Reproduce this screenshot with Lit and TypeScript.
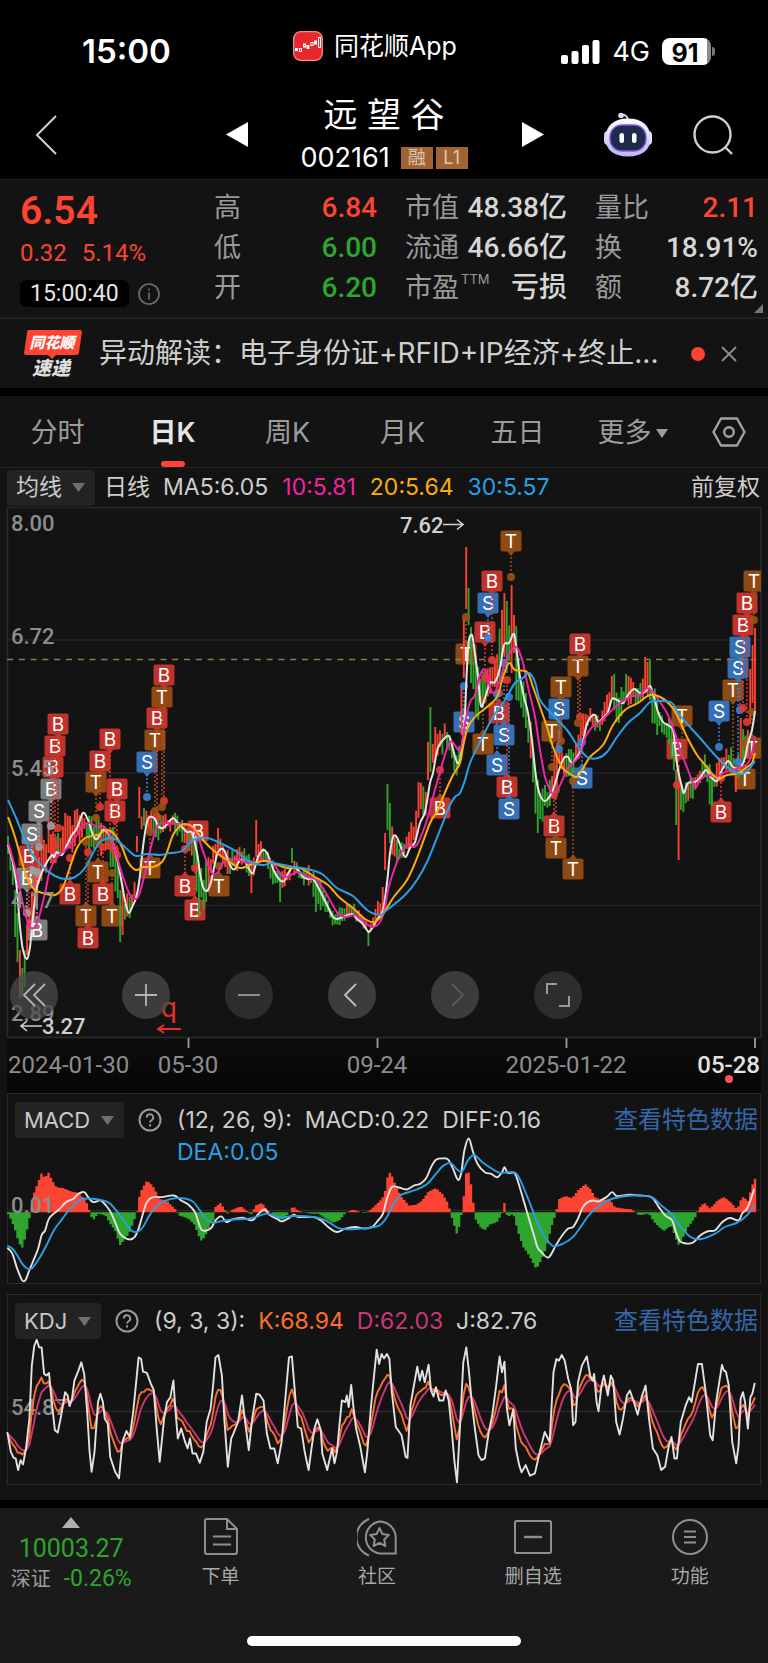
import { LitElement, html, svg, css } from "lit";
import { customElement, state } from "lit/decorators.js";
import { classMap } from "lit/directives/class-map.js";

type Pt = [number, number];

const toPoints = (text: string): Pt[] =>
  text
    .trim()
    .split(/\s+/)
    .map((pair) => pair.split(",").map(Number) as Pt);

/* Price panel, in panel units */
const MA5 = toPoints(`8,845 13,863 17,890 20,927 23,950 27,959 30,947 32,927 34,907 37,887 42,872 47,862 52,855 54,857 57,852 62,855 67,845 72,835 77,828 83,813 88,820 93,835 97,839 103,830 108,833 113,843 118,863 123,890 126,905 129,913 133,905 136,898 139,883 143,847 147,822 150,817 155,819 158,826 163,828 168,823 173,818 177,822 182,827 187,832 192,833 197,853 200,873 203,887 207,891 211,882 215,863 218,852 223,849 227,857 231,867 235,869 240,860 245,862 249,869 253,873 258,857 263,850 267,853 271,863 275,873 280,880 284,881 289,872 293,867 298,870 303,877 308,879 313,879 318,887 323,897 328,907 333,917 337,919 343,917 352,914 357,919 362,923 367,930 369,932 373,927 378,918 383,910 387,883 390,853 393,837 396,836 399,842 405,857 410,848 415,842 420,823 425,812 430,783 433,773 438,748 446,737 450,738 455,757 459,763 462,747 465,713 467,667 469,640 472,635 474,647 478,677 481,706 485,698 490,683 495,682 500,668 504,645 509,643 514,634 517,653 520,677 524,697 528,713 532,740 536,777 540,795 545,801 550,796 554,787 560,767 564,758 568,757 572,763 577,757 582,747 586,727 590,718 595,715 598,722 603,718 608,712 612,699 617,700 623,703 628,695 634,689 640,693 645,692 650,686 654,697 658,712 663,722 668,725 673,730 675,747 678,770 682,787 684,793 688,783 695,782 700,778 706,770 711,777 717,781 722,770 728,761 733,767 740,768 745,758 748,743 752,730 755,711`);
const MA10 = toPoints(`8,842 15,867 20,890 25,913 30,927 35,927 39,917 45,893 50,870 57,857 63,852 70,845 77,835 83,825 90,823 97,827 103,826 110,835 117,857 123,877 130,895 135,899 139,895 145,873 152,843 158,825 167,823 175,824 183,824 192,828 198,837 205,857 212,873 218,872 223,863 230,860 237,859 247,863 257,863 263,860 272,862 280,873 287,877 297,872 308,877 317,880 327,895 337,912 345,917 355,915 363,921 372,927 380,922 385,908 388,890 393,873 400,855 408,844 413,847 418,843 427,820 433,797 440,772 450,742 460,750 465,723 470,702 475,695 480,675 485,670 490,687 494,693 500,680 505,663 513,648 518,649 523,663 528,687 535,717 540,750 545,777 550,790 554,794 560,785 567,770 573,763 580,755 585,738 592,727 600,722 610,712 620,703 630,697 640,695 647,688 653,692 660,702 668,715 675,733 680,750 688,770 695,787 700,780 708,775 717,777 723,773 733,770 742,767 748,763 752,753 755,736`);
const MA20 = toPoints(`8,817 15,837 22,862 28,880 35,890 43,893 55,895 63,887 70,867 77,848 85,838 97,835 107,830 115,835 122,847 128,862 136,870 143,867 153,867 162,862 167,852 173,835 180,826 185,824 193,827 203,840 213,850 227,860 240,868 250,865 263,861 273,863 287,868 300,868 315,877 328,885 340,898 353,908 365,919 375,922 385,911 393,898 407,880 417,858 430,823 437,812 443,797 452,777 460,763 463,747 468,727 477,715 487,707 497,697 503,677 509,663 515,670 527,672 533,687 540,707 547,727 553,747 562,767 570,774 577,777 582,770 590,757 603,745 613,725 625,710 638,703 650,695 662,698 672,707 678,717 687,737 697,755 707,767 713,775 719,779 727,775 738,773 747,767 752,763 755,753`);
const MA30 = toPoints(`8,800 17,820 25,840 33,855 43,867 55,876 65,879 75,877 85,868 93,853 100,842 110,838 117,840 128,850 136,856 147,854 160,855 170,853 182,851 193,840 207,838 220,843 237,852 250,862 263,865 273,863 293,867 307,869 322,874 337,888 353,896 367,910 380,915 387,910 405,895 417,880 428,860 440,830 450,805 455,797 460,793 465,780 470,763 480,742 493,717 505,700 515,683 523,678 529,673 535,682 540,700 550,712 567,730 577,745 587,757 598,758 607,752 617,737 628,723 640,713 650,702 660,701 672,703 678,713 690,727 700,738 713,753 727,767 740,774 748,770 755,761`);

/* x, high, low */
const RANGE: [number, number, number][] = [
  [8,838,862],[13,862,895],[18,893,955],[21,950,995],[25,935,985],[30,900,935],[35,868,915],[42,835,880],[50,828,862],[57,835,870],[65,815,855],[75,812,850],[83,806,835],[90,820,853],[97,815,855],[107,823,850],[113,830,880],[119,860,930],[125,890,930],[130,895,918],[136,870,900],[139,835,855],[142,808,835],[150,806,832],[158,815,842],[165,815,835],[173,812,828],[182,820,842],[190,828,855],[197,840,895],[203,865,910],[210,850,885],[218,830,855],[226,845,880],[235,850,872],[245,845,870],[252,855,885],[258,835,860],[265,845,860],[271,860,885],[280,865,890],[287,870,885],[293,853,872],[300,865,885],[308,865,885],[316,875,900],[325,890,918],[335,910,928],[345,905,920],[355,905,922],[362,915,928],[369,925,938],[375,905,925],[381,897,915],[386,840,900],[389,800,850],[394,830,865],[400,845,865],[408,830,850],[415,815,845],[420,785,825],[427,780,815],[432,735,775],[438,725,765],[445,722,745],[452,735,765],[458,750,785],[463,690,740],[467,610,670],[471,630,680],[476,655,720],[482,670,710],[488,665,700],[495,655,700],[502,620,680],[508,610,680],[514,620,670],[520,665,720],[526,695,730],[532,730,790],[538,770,830],[545,785,815],[552,770,810],[558,730,780],[565,750,775],[573,750,775],[578,725,760],[585,705,735],[592,708,728],[600,715,735],[606,700,722],[612,678,712],[619,695,725],[627,675,705],[636,685,705],[643,680,700],[648,662,695],[652,675,720],[658,705,735],[664,715,740],[670,715,750],[675,740,790],[680,770,830],[685,785,808],[692,775,800],[700,765,785],[705,755,775],[711,770,810],[718,755,780],[724,753,770],[730,745,770],[736,755,790],[741,725,775],[747,730,765],[751,660,740],[755,635,705],
];

/* Sessions with a range of their own: x, high, low, rising */
const SPIKES: [number, number, number, boolean][] = [
  [15,890,937,false],[18,913,962,false],[20,950,998,true],[23,968,997,false],[27,925,955,true],[49,818,853,true],[65,813,848,true],[119,890,942,false],[122,885,935,true],[138,836,852,true],[140,787,818,true],[143,808,826,false],[200,867,917,false],[219,828,850,true],[252,860,893,true],[256,820,857,true],[280,872,902,false],[292,848,863,false],[316,880,912,false],[368,930,946,false],[386,833,870,true],[388,784,830,false],[391,803,843,false],[419,782,818,true],[422,783,809,true],[431,707,772,false],[428,742,780,true],[435,727,760,true],[462,686,735,true],[464,618,678,true],[466,547,609,true],[469,588,625,false],[471,627,683,false],[502,610,657,true],[504,593,657,true],[507,601,673,false],[511,585,673,true],[514,615,653,true],[516,626,700,false],[537,780,833,false],[611,676,700,true],[613,674,710,false],[627,674,700,false],[646,657,690,true],[649,660,700,false],[677,770,825,false],[679,765,860,true],[711,778,806,false],[741,718,770,true],[752,645,703,true],[755,628,713,true],
];

type Mark = [number, number, "B" | "S" | "T", number?, string?];
/* x, y, kind, y of the traded price, tone */
const MARKS: Mark[] = [
  [58,724,"B",828],[55,746,"B",845],[53,767,"B",850],[51,789,"B",826,"old"],[39,811,"S",847,"old"],[32,834,"S",870,"old"],[29,856,"B",911],[27,878,"B",913,"old"],[37,930,"B",872,"old"],
  [110,739,"B",846],[100,761,"B",807],[96,782,"T",818],[117,789,"B",855],[115,811,"B",850],
  [164,675,"B",801],[162,697,"T",807],[157,718,"B",817],[155,740,"T",811],[147,762,"S",797],
  [198,831,"B"],[150,868,"T",832],[70,894,"B",858],[98,872,"T",842],[103,894,"B",847],[86,916,"T",842],[88,938,"B",852],[112,916,"T",873],[185,886,"B",849],[195,910,"B",868],[219,886,"T",866],
  [511,541,"T",577],[492,581,"B",660],[488,603,"S",638],[485,632,"B",678],[466,654,"T",617],[464,722,"S",686],[483,744,"T",700],[499,713,"B",693],[504,735,"S",663],[497,765,"S",694],[507,787,"B",680],[509,809,"S",697],[440,808,"B",770],
  [561,687,"T",741],[559,709,"S",749],[552,731,"T",767],[580,644,"B",717],[578,666,"T",723],[582,778,"S",742],[554,826,"B",795],[556,848,"T",790],[573,869,"T",781],
  [682,716,"T",752],[677,749,"B",785],[719,711,"S",747],[733,690,"T",770],[738,668,"S",762],[740,647,"S",710],[743,625,"B",708],[747,603,"B",722],[754,581,"T",620],[752,748,"T",712],[745,779,"T",744],[721,812,"B",778],
];

/* Indicator panels, in plotting units */
const UNIT_X = 768 / 1568;
const HIST = toPoints(`15,384 20,395 30,430 38,470 45,490 52,455 60,400 65,365 70,320 78,290 85,262 92,280 98,258 105,280 115,305 130,308 145,318 160,322 175,345 182,374 185,392 192,402 200,385 215,390 225,415 235,435 245,480 255,462 265,440 275,400 281,370 283,340 290,310 300,285 308,295 316,310 325,340 340,345 360,375 365,390 385,400 398,420 405,450 412,468 420,450 428,420 438,400 440,365 450,353 460,375 465,385 475,372 492,363 503,375 512,390 522,360 535,352 545,372 555,385 575,405 590,384 598,362 608,376 635,385 650,385 665,400 680,412 693,405 705,384 720,372 745,384 755,375 770,355 780,340 788,310 793,255 800,270 808,300 820,335 835,360 850,358 862,345 875,318 890,308 903,325 912,345 918,370 922,395 933,448 940,410 944,370 948,320 952,262 958,260 963,310 968,370 970,400 980,425 990,435 1000,418 1015,410 1025,384 1030,352 1034,388 1040,392 1048,384 1052,410 1060,450 1068,485 1080,510 1095,552 1105,525 1115,490 1125,430 1135,384 1142,340 1155,332 1168,338 1180,315 1195,296 1205,310 1215,335 1230,345 1245,340 1255,365 1275,370 1290,372 1305,390 1325,384 1335,410 1355,438 1370,420 1385,480 1395,455 1405,425 1420,395 1427,368 1438,352 1450,370 1465,345 1478,335 1492,350 1505,372 1512,345 1520,330 1525,355 1532,320 1540,280`);
const DIFF = toPoints(`15,488 25,505 35,550 45,585 52,585 60,555 70,520 78,490 85,450 92,435 100,400 112,382 122,370 135,350 150,340 160,325 172,320 180,335 190,350 205,345 215,358 225,378 235,410 243,440 252,455 265,463 275,455 283,430 290,395 300,350 312,335 330,335 355,330 370,345 385,358 398,380 405,410 413,435 430,430 440,405 452,393 462,410 475,402 495,397 515,405 528,385 540,372 550,388 565,400 575,408 590,398 600,388 610,395 640,395 655,405 670,425 688,440 705,430 725,425 745,430 760,425 772,405 782,385 790,340 800,305 812,305 830,312 845,300 858,295 870,278 880,245 890,222 905,218 915,222 925,250 935,283 942,260 948,195 957,158 965,195 975,235 990,260 1003,265 1015,275 1025,260 1030,245 1037,262 1050,262 1058,290 1070,350 1080,400 1090,450 1097,485 1105,500 1120,517 1135,480 1148,450 1160,430 1170,425 1180,400 1190,365 1200,350 1212,345 1222,348 1238,335 1250,320 1260,332 1285,328 1305,330 1330,335 1345,365 1358,390 1372,405 1380,440 1388,468 1400,475 1415,472 1430,450 1445,438 1460,435 1475,410 1490,398 1508,405 1515,385 1525,370 1532,345 1540,310`);
const DEA = toPoints(`15,482 25,490 35,510 45,535 55,550 65,550 80,520 95,480 110,435 125,405 140,375 155,352 170,340 190,340 210,345 225,355 240,380 255,410 268,435 280,440 292,425 305,390 320,362 340,345 360,338 380,340 395,350 408,375 420,400 435,412 450,408 475,402 510,400 545,385 570,397 600,392 640,395 665,405 690,428 710,432 750,428 775,420 790,395 805,350 820,328 845,315 870,298 890,265 905,240 920,232 932,250 943,258 955,225 968,208 985,230 1005,250 1020,262 1040,260 1055,265 1070,310 1085,365 1100,420 1115,460 1130,483 1150,475 1170,455 1190,415 1205,385 1225,360 1250,340 1290,330 1330,335 1350,360 1370,385 1390,425 1410,455 1430,462 1460,445 1480,425 1505,412 1525,390 1540,360`);
const J_LINE = toPoints(`15,440 22,500 28,518 32,520 37,555 42,525 47,538 53,490 60,400 65,240 70,180 75,162 80,185 85,185 90,265 95,270 100,262 105,340 112,435 118,442 125,390 133,320 138,330 142,362 147,340 152,285 160,255 166,230 172,265 178,380 183,500 187,560 193,500 200,350 205,325 210,350 214,400 220,415 225,515 235,560 243,580 250,470 258,437 265,455 272,380 283,215 288,220 292,258 300,262 308,295 314,315 320,430 326,530 335,400 341,350 348,335 354,285 358,370 363,460 370,430 378,470 383,490 388,460 393,505 400,505 408,533 415,500 422,410 430,370 435,300 440,215 446,208 453,270 458,400 465,545 472,460 478,440 486,410 494,330 500,405 508,495 515,400 523,325 530,328 538,345 545,445 552,490 560,490 567,535 575,470 583,330 590,215 596,212 602,320 608,425 615,430 622,500 630,555 636,490 642,430 648,402 655,435 658,505 668,555 678,490 683,535 688,500 693,420 698,345 705,350 708,330 712,365 717,298 722,370 727,430 735,480 745,562 750,500 757,370 763,280 769,192 774,235 779,205 784,218 790,205 795,220 800,320 808,425 820,450 828,515 832,518 838,360 845,300 852,243 857,285 862,255 867,290 875,237 880,315 885,333 890,305 897,345 905,345 910,315 916,345 922,430 928,530 933,592 940,400 946,230 952,185 958,265 963,350 970,435 977,510 983,525 990,520 998,440 1005,390 1013,300 1020,212 1025,260 1030,228 1035,370 1040,420 1048,372 1053,490 1060,540 1065,562 1073,540 1082,572 1092,565 1102,500 1112,440 1122,470 1130,260 1136,220 1141,225 1147,208 1153,225 1160,280 1166,310 1170,420 1175,410 1180,290 1188,240 1198,212 1205,270 1210,285 1213,265 1218,350 1222,378 1228,300 1233,270 1237,300 1241,330 1247,270 1252,285 1258,410 1265,448 1272,400 1280,330 1286,315 1292,340 1302,388 1310,335 1318,300 1325,400 1333,490 1342,510 1350,555 1358,545 1365,485 1371,455 1377,520 1382,520 1390,410 1400,360 1407,335 1412,350 1425,235 1433,235 1440,310 1450,450 1455,465 1462,350 1474,238 1478,255 1482,258 1488,300 1495,470 1503,535 1508,480 1512,340 1517,320 1521,350 1527,430 1532,335 1536,325 1541,292`);

const fmt = (n: number) => n.toFixed(1);

/* Catmull-Rom spline through the samples */
function smooth(p: Pt[]): string {
  let d = `M${fmt(p[0][0])} ${fmt(p[0][1])}`;
  for (let i = 0; i < p.length - 1; i++) {
    const a = p[Math.max(i - 1, 0)];
    const b = p[i];
    const c = p[i + 1];
    const e = p[Math.min(i + 2, p.length - 1)];
    d += `C${fmt(b[0] + (c[0] - a[0]) / 6)} ${fmt(b[1] + (c[1] - a[1]) / 6)} ${fmt(c[0] - (e[0] - b[0]) / 6)} ${fmt(c[1] - (e[1] - b[1]) / 6)} ${fmt(c[0])} ${fmt(c[1])}`;
  }
  return d;
}

const straight = (p: Pt[]) => "M" + p.map(([x, y]) => `${fmt(x)} ${fmt(y)}`).join("L");

function at(p: Pt[], x: number): number {
  let i = 1;
  while (i < p.length - 1 && p[i][0] < x) i++;
  const [x0, y0] = p[i - 1];
  const [x1, y1] = p[i];
  const t = Math.min(1, Math.max(0, (x - x0) / (x1 - x0)));
  return y0 + (y1 - y0) * t;
}

const PITCH = 747 / 313;
const SESSIONS = Array.from({ length: 314 }, (_, i) => 8 + i * PITCH);

function candlePaths(): [string, string] {
  const highs = RANGE.map(([x, h]) => [x, h] as Pt);
  const lows = RANGE.map(([x, , l]) => [x, l] as Pt);
  let seed = 7;
  const random = () => (seed = (seed * 16807) % 2147483647) / 2147483647;
  let up = "";
  let down = "";
  for (const x of SESSIONS) {
    const spike = SPIKES.find((s) => Math.abs(s[0] - x) <= PITCH / 2);
    const h = at(highs, x);
    const l = at(lows, x);
    const r1 = random();
    const r2 = random();
    const r3 = random();
    const size = l - h;
    const top = spike ? spike[1] : h + size * (r1 * 0.45 - 0.08);
    const bottom = spike ? spike[2] : l - size * (r2 * 0.45 - 0.08);
    const slope = at(MA5, x + 3) - at(MA5, x - 3);
    const rising = spike ? spike[3] : r3 > 0.5 + Math.max(-0.38, Math.min(0.38, slope / 22));
    const seg = `M${fmt(x)} ${fmt(top)}V${fmt(bottom)}`;
    if (rising) up += seg;
    else down += seg;
  }
  return [up, down];
}

function kdj(): { k: Pt[]; d: Pt[]; j: Pt[] } {
  const k: Pt[] = [];
  const d: Pt[] = [];
  let prev = 445;
  for (const x of SESSIONS) {
    const j = at(J_LINE, x / UNIT_X);
    const kv = ((j + (4 / 3) * prev) * 3) / 7;
    prev = (2 / 3) * prev + kv / 3;
    k.push([x, 1285 + kv / 3]);
    d.push([x, 1285 + prev / 3]);
  }
  return { k, d, j: J_LINE.map(([x, y]) => [x * UNIT_X, 1285 + y / 3] as Pt) };
}

const macdPt = ([x, y]: Pt): Pt => [x * UNIT_X, 1085 + y / 3];

function histogram(): [string, string] {
  let up = "";
  let down = "";
  const zero = 1212;
  for (const x of SESSIONS) {
    const y = 1085 + at(HIST, x / UNIT_X) / 3;
    const seg = `M${fmt(x - 1.2)} ${zero}V${fmt(y)}h2.4V${zero}z`;
    if (y < zero) up += seg;
    else down += seg;
  }
  return [up, down];
}

const CANDLES = candlePaths();
const BARS = histogram();
const KDJ = kdj();

const TONES: Record<string, string> = { B: "#c0332a", S: "#366fb6", T: "#8f4a13", old: "#7d7d7d" };
const PRICE_TONES: Record<string, string> = { B: "#e23a31", S: "#3d7fd6", T: "#9c5314", old: "#a0a0a0" };

@customElement("price-chart")
export class PriceChart extends LitElement {
  static styles = css`
    :host { display: block; position: relative; }
    svg { display: block; }
    .plot { width: 100%; }
    .axis { font: 500 22px Roboto, sans-serif; fill: #8d8d8d; }
    .extreme { font: 500 22px Roboto, sans-serif; fill: #d0d0d0; }
    .date { font: 24px Roboto, sans-serif; fill: #8d8d8d; }
    .latest { fill: #e2e2e2; font-weight: 500; }
    .event { font: 28px Roboto, sans-serif; fill: #e0302b; }
    .letter { font: 19px Inter, sans-serif; fill: #fff; text-anchor: middle; }
    .end { text-anchor: end; }
    .middle { text-anchor: middle; }
    .tools { position: absolute; top: 79%; left: 10px; display: flex; gap: 55px; padding-top: 1px; }
    .tool { width: 48px; height: 48px; padding: 0; border: 0; border-radius: 50%; background: rgba(75, 75, 75, 0.75); display: grid; place-items: center; }
    .tool:first-child { margin-right: 9px; }
    .dim { background: rgba(52, 52, 52, 0.8); }
  `;

  private mark([x, y, kind, price, tone]: Mark) {
    const key = tone ?? kind;
    const below = price !== undefined && price > y;
    const arrow = below ? `M${x - 4} ${y + 10}h8l-4 5z` : `M${x - 4} ${y - 10}h8l-4 -5z`;
    return svg`
      <rect x=${x - 10.5} y=${y - 10.5} width="21" height="21" rx="2" fill=${TONES[key]}></rect>
      ${price === undefined ? null : svg`<path d=${arrow} fill=${TONES[key]}></path>`}
      <text class="letter" x=${x} y=${y + 7}>${kind}</text>`;
  }

  private stem([x, y, kind, price, tone]: Mark) {
    if (price === undefined) return null;
    const start = price > y ? y + 12 : y - 12;
    return svg`
      <path d="M${x} ${start}V${price}" stroke=${PRICE_TONES[tone ?? kind]} stroke-width="1.5" stroke-dasharray="2 2"></path>
      <circle cx=${x} cy=${price} r="4" fill=${PRICE_TONES[tone ?? kind]} opacity="0.9"></circle>`;
  }

  render() {
    return html`
      <svg class="plot" viewBox="0 507 768 586" role="img" aria-label="日K">
        <defs>
          <clipPath id="plot"><rect x="7" y="507" width="754" height="531"></rect></clipPath>
          <linearGradient id="fade" x1="0" x2="0" y1="0" y2="1"><stop offset="0" stop-color="#0d0d0d"></stop><stop offset="1" stop-color="#060606"></stop></linearGradient>
        </defs>
        <rect x="7" y="1038" width="754" height="55" fill="url(#fade)"></rect>
        <path d="M7 640H761M7 773H761M7 905.5H761" stroke="#242424" stroke-width="1.5"></path>
        <rect x="7.5" y="507.5" width="753.5" height="530" fill="none" stroke="#2b2b2b" stroke-width="1.5"></rect>
        <g clip-path="url(#plot)">
          ${MARKS.map((m) => this.mark(m))}
          <path d="M7 659.5H757" stroke="#93794f" stroke-width="1.3" stroke-dasharray="6 5.8"></path>
          <path d=${CANDLES[0]} stroke="#fb4331" stroke-width="1.9"></path>
          <path d=${CANDLES[1]} stroke="#2ea22c" stroke-width="1.9"></path>
          ${MARKS.map((m) => this.stem(m))}
          <g fill="none" stroke-width="2" stroke-linejoin="round">
            <path d=${smooth(MA5)} stroke="#e4e4e4"></path>
            <path d=${smooth(MA10)} stroke="#ef25a3"></path>
            <path d=${smooth(MA20)} stroke="#fcab0c"></path>
            <path d=${smooth(MA30)} stroke="#2a9fe6"></path>
          </g>
        </g>
        <text class="axis" x="11" y="531">8.00</text>
        <text class="axis" x="11" y="644">6.72</text>
        <text class="axis" x="11" y="776">5.45</text>
        <text class="axis" x="11" y="908">4.17</text>
        <text class="axis" x="11" y="1021">2.89</text>
        <text class="extreme" x="400" y="533">7.62</text>
        <path d="M443 524.500h20m-6 -5l6 5l-6 5" fill="none" stroke="#d0d0d0" stroke-width="1.6"></path>
        <text class="extreme" x="42" y="1034">3.27</text>
        <path d="M42 1026H21m6 -5l-6 5l6 5" fill="none" stroke="#d0d0d0" stroke-width="1.6"></path>
        <text class="event" x="161" y="1017">q</text>
        <path d="M181 1029H159m5 -4l-6 4l6 4" fill="none" stroke="#e0302b" stroke-width="2"></path>
        <path d="M188.500 1038v10M377.500 1038v10M566.500 1038v10M755 1038v10" stroke="#9a9a9a" stroke-width="1.8"></path>
        <text class="date" x="8" y="1073">2024-01-30</text>
        <text class="date middle" x="188" y="1073">05-30</text>
        <text class="date middle" x="377" y="1073">09-24</text>
        <text class="date middle" x="566" y="1073">2025-01-22</text>
        <text class="date latest end" x="760" y="1073">05-28</text>
        <circle cx="729" cy="1079" r="4" fill="#fb5252"></circle>
      </svg>
      <div class="tools">
        <button class="tool" aria-label="最早">
          <svg width="26" height="26" viewBox="0 0 26 26" fill="none" stroke="#b4b4b4" stroke-width="1.8"><path d="M14 2L3 13L14 24M24 2L13 13L24 24"></path></svg>
        </button>
        <button class="tool" aria-label="放大">
          <svg width="24" height="24" viewBox="0 0 24 24" stroke="#b4b4b4" stroke-width="1.8"><path d="M1 12H23M12 1V23"></path></svg>
        </button>
        <button class="tool dim" aria-label="缩小">
          <svg width="24" height="24" viewBox="0 0 24 24" stroke="#9a9a9a" stroke-width="1.8"><path d="M1 12H23"></path></svg>
        </button>
        <button class="tool" aria-label="向前">
          <svg width="26" height="26" viewBox="0 0 26 26" fill="none" stroke="#c0c0c0" stroke-width="1.8"><path d="M17 2L6 13L17 24"></path></svg>
        </button>
        <button class="tool" aria-label="向后" disabled>
          <svg width="26" height="26" viewBox="0 0 26 26" fill="none" stroke="#5a5a5a" stroke-width="1.8"><path d="M10 2L21 13L10 24"></path></svg>
        </button>
        <button class="tool dim" aria-label="全屏">
          <svg width="26" height="26" viewBox="0 0 26 26" fill="none" stroke="#9a9a9a" stroke-width="2"><path d="M2 12V2H12M14 24H24V14"></path></svg>
        </button>
      </div>`;
  }
}

const shared = css`
  * { box-sizing: border-box; }
  svg { display: block; flex: none; }
  button, select { font: inherit; color: inherit; border: 0; background: none; padding: 0; margin: 0; }
  a { text-decoration: none; }
  .picker { display: flex; align-items: center; position: relative; height: 36px; background: #232323; border-radius: 4px; color: #c9c9c9; }
  .picker select { appearance: none; height: 36px; padding: 0 33px 0 9px; font-size: 22px; outline: 0; }
  .picker svg { position: absolute; right: 10px; pointer-events: none; }
`;

const caret = html`<svg width="13" height="9" viewBox="0 0 13 9"><path d="M0 0H13L6.500 9z" fill="#6f6f6f"></path></svg>`;

@customElement("app-root")
export class AppRoot extends LitElement {
  @state() private tab = "日K";

  static styles = [
    shared,
    css`
      :host { display: block; background: #131313; color: #d6d6d6; font-family: Inter, "Noto Sans CJK SC", sans-serif; line-height: 1.2; }
      .top { background: #000; color: #fff; }
      .status { display: grid; grid-template-columns: 1fr auto 1fr; align-items: center; height: 96px; padding: 8px 53px 0; }
      .clock { font-size: 33px; font-weight: 600; padding-left: 29px; }
      .source { display: flex; align-items: center; gap: 11px; font-size: 25px; padding: 0 18px 12px 0; }
      .signal { display: flex; align-items: center; justify-content: flex-end; gap: 12px; font-size: 27px; }
      .battery { display: flex; align-items: center; gap: 1px; }
      .charge { display: grid; place-items: center; width: 49px; height: 27px; border-radius: 8px; background: linear-gradient(90deg, #fff 91%, #8b8b8b 91%); color: #000; font-size: 25px; font-weight: 700; padding-right: 3px; }
      .nub { width: 3px; height: 9px; border-radius: 0 4px 4px 0; background: #777; }
      .nav { display: grid; grid-template-columns: 1fr auto 1fr; align-items: center; height: 83px; padding: 0 35px 6px; }
      .left, .right { display: flex; align-items: center; justify-content: space-between; }
      .left { padding-right: 52px; }
      .right { padding-left: 54px; }
      .icons { display: flex; align-items: center; gap: 41px; }
      .stock { display: flex; flex-direction: column; align-items: center; gap: 10px; }
      .name { margin: 0; font-size: 34px; font-weight: 400; line-height: 37px; white-space: nowrap; }
      .code { display: flex; align-items: center; gap: 3px; font-size: 27px; line-height: 30px; }
      .code span { margin-right: 8px; }
      .badge { display: grid; place-items: center; width: 32px; height: 22px; background: #a16431; color: #d9c6b5; font-size: 18px; font-style: normal; line-height: 22px; }
      .num { font-family: Roboto, "Noto Sans CJK SC", sans-serif; }
      .quote { position: relative; display: grid; grid-template-columns: 166fr 163fr 162fr 163fr; gap: 28px; padding: 8px 10px 9px 20px; border-top: 1px solid #1d1d1d; border-bottom: 2px solid #222; }
      .last { display: flex; flex-direction: column; color: #fd4332; padding-top: 4px; }
      .price { font-size: 39px; font-weight: 600; line-height: 38px; }
      .change { display: flex; gap: 15px; font-size: 24px; line-height: 28px; margin-top: 9px; }
      .time { display: flex; align-items: center; gap: 9px; margin-top: 13px; }
      .pill { background: #000; color: #e4e4e4; border-radius: 7px; font-size: 23px; line-height: 27px; padding: 0 10px; }
      .stats { margin: 0; display: flex; flex-direction: column; }
      .stat { display: flex; justify-content: space-between; align-items: center; height: 40px; }
      .stat dt { display: flex; font-size: 27px; color: #9a9a9a; white-space: nowrap; }
      .stat dd { margin: 0; font-size: 28px; font-weight: 500; white-space: nowrap; }
      .ttm { font-size: 13px; line-height: 14px; padding-left: 2px; }
      .up { color: #fd4332; }
      .down { color: #2fa52d; }
      .corner { position: absolute; right: 5px; bottom: 4px; }
      .notice { display: flex; align-items: center; height: 69px; padding: 0 31px 0 24px; }
      .logo { overflow: visible; }
      .headline { flex: 1; margin: 0 16px; font-size: 28px; color: #cfcfcf; white-space: nowrap; }
      .dot { width: 14px; height: 14px; border-radius: 50%; background: #fd4332; margin-right: 16px; }
      .band { height: 8px; background: #000; }
      .tabs { display: grid; grid-template-columns: repeat(6, 115fr) 78fr; height: 72px; border-bottom: 1px solid #232323; }
      .tab { position: relative; display: flex; align-items: center; justify-content: center; gap: 4px; padding-top: 4px; font-size: 27px; color: #9c9c9c; }
      .setup { padding-top: 0; }
      .on { color: #e6e6e6; font-weight: 600; }
      .on::after { content: ""; position: absolute; bottom: 0; left: calc(50% - 12px); width: 24px; height: 6px; border-radius: 3px; background: #fd4332; }
      .averages { display: flex; align-items: center; height: 39px; padding: 0 8px 0 7px; font-size: 23px; color: #cdcdcd; }
      .averages .picker { margin-right: 9px; }
      .averages .picker select { font-size: 23px; }
      .period { margin-right: 13px; }
      .ma { margin-right: 14px; }
      .adjust { margin-left: auto; }
      .pink { color: #ef25a3; }
      .amber { color: #fcab0c; }
      .sky { color: #2a9fe6; }
      .orange { color: #ff6f2c; }
      .rose { color: #cb3777; }
      .panel { position: relative; margin: 0 7px; border: 1px solid #2a2a2a; height: 191px; }
      .panel + .panel { margin-top: 10px; }
      .graph { position: absolute; inset: 0 -8px; }
      .graph svg { width: 100%; height: 100%; }
      .axis { font: 500 22px Roboto, sans-serif; fill: #8d8d8d; }
      .head { position: relative; display: flex; align-items: flex-start; padding: 8px 2px 0 7px; font-size: 23px; line-height: 36px; color: #cdcdcd; }
      .help { height: 36px; margin: 0 15px 0 14px; display: grid; place-items: center; }
      .values { flex: 1; display: flex; flex-wrap: wrap; column-gap: 13px; line-height: 32px; padding-top: 2px; }
      .link { color: #3567a8; font-size: 24px; white-space: nowrap; }
      .foot { margin-top: 15px; border-top: 8px solid #000; background: #1a1a1a; }
      .bar { display: grid; grid-template-columns: 142fr repeat(4, 156fr); height: 128px; padding-top: 9px; }
      .index { display: flex; flex-direction: column; align-items: center; color: #2fa52d; font-size: 25px; line-height: 30px; }
      .sub { display: flex; align-items: center; gap: 13px; font-size: 23px; }
      .market { color: #9c9c9c; font-size: 20px; }
      .index svg { margin-bottom: 6px; }
      .action { display: flex; flex-direction: column; align-items: center; gap: 7px; color: #a8a8a8; font-size: 19px; line-height: 26px; }
      .home { width: 274px; height: 10px; border-radius: 5px; background: #fff; margin: 0 auto; }
      .rest { height: 17px; }
    `,
  ];

  private tabButton(name: string, more = false) {
    const on = this.tab === name;
    return html`<button class=${classMap({ tab: true, on })} role="tab" aria-selected=${on ? "true" : "false"} @click=${() => (this.tab = name)}>
      ${name}${more ? html`<svg width="12" height="9" viewBox="0 0 12 9"><path d="M0 0H12L6 9z" fill="#9c9c9c"></path></svg>` : null}
    </button>`;
  }

  private stat(label: string, value: string, tone = "", note = "") {
    return html`<div class="stat">
      <dt>${label}${note ? html`<span class="ttm">${note}</span>` : null}</dt>
      <dd class="num ${tone}">${value}</dd>
    </div>`;
  }

  private picker(id: string, label: string, value: string) {
    return html`<label class="picker" for=${id}>
      <select id=${id} aria-label=${label}><option>${value}</option></select>${caret}
    </label>`;
  }

  private help() {
    return html`<button class="help" aria-label="说明">
      <svg width="24" height="24" viewBox="0 0 24 24" fill="none" stroke="#9a9a9a" stroke-width="2"><circle cx="12" cy="12" r="10.500"></circle><path d="M8.800 9.500a3.200 3.200 0 1 1 4.800 2.700c-1.100 .700-1.600 1.200-1.600 2.400M12 16.300v2.200" stroke-width="1.900"></path></svg>
    </button>`;
  }

  render() {
    return html`
      <header class="top">
        <div class="status">
          <div class="clock">15:00</div>
          <div class="source">
            <svg width="30" height="30" viewBox="0 0 30 30"><rect x=".7" y=".7" width="28.600" height="28.600" rx="7" fill="#e8282b" stroke="#f58a86" stroke-width="1.300"></rect><g fill="#fff"><rect x="2" y="17" width="3" height="3"></rect><rect x="13.500" y="14" width="3" height="4"></rect><rect x="21" y="9.500" width="3" height="4"></rect></g><g fill="none" stroke="#fff"><rect x="6.500" y="17.500" width="2" height="3"></rect><rect x="10.500" y="13" width="2" height="3"></rect><rect x="18" y="11.500" width="2" height="3"></rect><rect x="25.500" y="6.500" width="2" height="10"></rect></g></svg>
            同花顺App
          </div>
          <div class="signal">
            <svg width="39" height="24" viewBox="0 0 39 24" fill="#fff"><rect x="0" y="15" width="7" height="9" rx="2"></rect><rect x="10.500" y="11" width="7" height="13" rx="2"></rect><rect x="21" y="5" width="7" height="19" rx="2"></rect><rect x="31.500" y="0" width="7" height="24" rx="2"></rect></svg>
            <span>4G</span>
            <span class="battery"><span class="charge">91</span><span class="nub"></span></span>
          </div>
        </div>
        <nav class="nav">
          <div class="left">
            <button aria-label="返回"><svg width="23" height="40" viewBox="0 0 23 40" fill="none" stroke="#d0d0d0" stroke-width="2"><path d="M21 1L2 20L21 39"></path></svg></button>
            <button aria-label="上一只"><svg width="22" height="25" viewBox="0 0 22 25"><path d="M22 0V25L0 12.500z" fill="#fff"></path></svg></button>
          </div>
          <div class="stock">
            <h1 class="name">远 望 谷</h1>
            <div class="code"><span>002161</span><i class="badge">融</i><i class="badge">L1</i></div>
          </div>
          <div class="right">
            <button aria-label="下一只"><svg width="22" height="25" viewBox="0 0 22 25"><path d="M0 0V25L22 12.500z" fill="#fff"></path></svg></button>
            <div class="icons">
              <button aria-label="助手">
                <svg width="48" height="45" viewBox="0 0 48 45">
                  <defs><linearGradient id="shell" x1="0" y1="0" x2="0" y2="1"><stop offset="0" stop-color="#ffffff"></stop><stop offset="1" stop-color="#b9b6f0"></stop></linearGradient></defs>
                  <path d="M17 3q6 -1 7 5" fill="none" stroke="#d9d7f5" stroke-width="2"></path><circle cx="17" cy="3.500" r="2.800" fill="#dcdaf6"></circle>
                  <rect x="0" y="19" width="8" height="14" rx="4" fill="#cfcdf4"></rect><rect x="40" y="19" width="8" height="14" rx="4" fill="#e4e3fa"></rect>
                  <path d="M24 6.500C38 6.500 46.500 14 46.500 26S38 44.500 24 44.500S1.500 38 1.500 26S10 6.500 24 6.500z" fill="url(#shell)"></path>
                  <rect x="6" y="13" width="36" height="26" rx="12" fill="#202a4c" stroke="#8558dc" stroke-width="1.400"></rect>
                  <rect x="15.500" y="21" width="4.500" height="10" rx="2.200" fill="#fff"></rect><rect x="28" y="21" width="4.500" height="10" rx="2.200" fill="#fff"></rect>
                </svg>
              </button>
              <button aria-label="搜索"><svg width="40" height="40" viewBox="0 0 40 40" fill="none" stroke="#d0d0d0" stroke-width="2.400"><circle cx="19.500" cy="19.500" r="18"></circle><path d="M32 32L39 39"></path></svg></button>
            </div>
          </div>
        </nav>
      </header>

      <section class="quote">
        <div class="last num">
          <div class="price">6.54</div>
          <div class="change"><span>0.32</span><span>5.14%</span></div>
          <div class="time">
            <span class="pill">15:00:40</span>
            <svg width="22" height="22" viewBox="0 0 22 22" fill="none" stroke="#6e6e6e" stroke-width="1.600"><circle cx="11" cy="11" r="10"></circle><path d="M11 9.500v7M11 5.500v2"></path></svg>
          </div>
        </div>
        <dl class="stats">${this.stat("高", "6.84", "up")}${this.stat("低", "6.00", "down")}${this.stat("开", "6.20", "down")}</dl>
        <dl class="stats">${this.stat("市值", "48.38亿")}${this.stat("流通", "46.66亿")}${this.stat("市盈", "亏损", "", "TTM")}</dl>
        <dl class="stats">${this.stat("量比", "2.11", "up")}${this.stat("换", "18.91%")}${this.stat("额", "8.72亿")}</dl>
        <svg class="corner" width="9" height="9" viewBox="0 0 9 9"><path d="M9 0V9H0z" fill="#777"></path></svg>
      </section>

      <section class="notice">
        <svg class="logo" width="59" height="48" viewBox="0 0 59 48" font-family="Noto Sans CJK SC, sans-serif" font-weight="900" font-style="italic">
          <path d="M5 0H56q2 0 2 2L55 22q0 3 -3 3H32l-4 4l-4 -4H2q-2 0 -2 -2L3 3q0 -3 2 -3z" fill="#fd4332"></path>
          <text x="28" y="18" font-size="15" fill="#fff" text-anchor="middle">同花顺</text>
          <text x="27" y="45" font-size="19" fill="#dedede" text-anchor="middle">速递</text>
        </svg>
        <div class="headline">异动解读：电子身份证+RFID+IP经济+终止...</div>
        <span class="dot"></span>
        <button aria-label="关闭"><svg width="16" height="16" viewBox="0 0 16 16" stroke="#8f8f8f" stroke-width="1.800"><path d="M1 1L15 15M15 1L1 15"></path></svg></button>
      </section>
      <div class="band"></div>

      <div class="tabs" role="tablist">
        ${["分时", "日K", "周K", "月K", "五日"].map((t) => this.tabButton(t))}${this.tabButton("更多", true)}
        <button class="tab setup" aria-label="设置"><svg width="34" height="30" viewBox="0 0 34 30" fill="none" stroke="#a2a2a2" stroke-width="2.400"><path d="M9 1.500H25L32.500 15L25 28.500H9L1.500 15z" stroke-linejoin="round"></path><circle cx="17" cy="15" r="4.800"></circle></svg></button>
      </div>

      <div class="averages">
        ${this.picker("overlay", "主图指标", "均线")}
        <span class="period">日线</span><span class="ma">MA5:6.05</span><span class="ma pink">10:5.81</span><span class="ma amber">20:5.64</span><span class="ma sky">30:5.57</span>
        <span class="adjust">前复权</span>
      </div>

      <price-chart></price-chart>

      <section class="panel">
        <div class="graph">
          <svg viewBox="0 1093 768 190" preserveAspectRatio="none">
            <path d="M7 1210H761" stroke="#2a2a2a" stroke-width="1.500"></path>
            <path d=${BARS[0]} fill="#fd4332"></path>
            <path d=${BARS[1]} fill="#2fa52d"></path>
            <path d=${smooth(DIFF.map(macdPt))} fill="none" stroke="#e2e2e2" stroke-width="1.900"></path>
            <path d=${smooth(DEA.map(macdPt))} fill="none" stroke="#2a9fe6" stroke-width="1.900"></path>
            <text class="axis" x="11" y="1213">0.01</text>
          </svg>
        </div>
        <div class="head">
          ${this.picker("macd", "副图指标一", "MACD")}${this.help()}
          <div class="values"><span>(12, 26, 9):</span><span>MACD:0.22</span><span>DIFF:0.16</span><span class="sky">DEA:0.05</span></div>
          <a class="link" href="#macd">查看特色数据</a>
        </div>
      </section>

      <section class="panel">
        <div class="graph">
          <svg viewBox="0 1294 768 190" preserveAspectRatio="none">
            <path d="M7 1411H761" stroke="#2a2a2a" stroke-width="1.500"></path>
            <text class="axis" x="11" y="1415">54.87</text>
            <g fill="none" stroke-width="1.900" stroke-linejoin="round">
              <path d=${straight(KDJ.d)} stroke="#cb3777"></path>
              <path d=${straight(KDJ.k)} stroke="#ff6f2c"></path>
              <path d=${straight(KDJ.j)} stroke="#e2e2e2"></path>
            </g>
          </svg>
        </div>
        <div class="head">
          ${this.picker("kdj", "副图指标二", "KDJ")}${this.help()}
          <div class="values"><span>(9, 3, 3):</span><span class="orange">K:68.94</span><span class="rose">D:62.03</span><span>J:82.76</span></div>
          <a class="link" href="#kdj">查看特色数据</a>
        </div>
      </section>

      <footer class="foot">
        <div class="bar">
          <div class="index num">
            <svg width="18" height="11" viewBox="0 0 18 11"><path d="M9 0L18 11H0z" fill="#b0b0b0"></path></svg>
            <span>10003.27</span>
            <span class="sub"><span class="market">深证</span><span>-0.26%</span></span>
          </div>
          <button class="action">
            <svg width="38" height="40" viewBox="0 0 38 40" fill="none" stroke="#8f8f8f" stroke-width="2"><path d="M5 2H25L35 12V35q0 2 -2 2H5q-2 0 -2 -2V4q0 -2 2 -2zM25 2V12H35M11 19.500H29M11 27.500H29"></path></svg>
            下单
          </button>
          <button class="action">
            <svg width="40" height="40" viewBox="0 0 40 40" fill="none" stroke="#8f8f8f" stroke-width="2"><path d="M22.500 4.500A16.200 16.200 0 0 0 22.500 36.500H38.700V20.500A16.200 16.200 0 0 0 22.500 4.500zM12 2A19.500 19.500 0 0 0 12 38.500"></path><path d="M22.500 11l2.900 6 6.500 .900-4.700 4.600 1.100 6.500-5.800-3.100-5.800 3.100 1.100-6.500-4.700-4.600 6.500-.900z" stroke-linejoin="round"></path></svg>
            社区
          </button>
          <button class="action">
            <svg width="38" height="40" viewBox="0 0 38 40" fill="none" stroke="#8f8f8f" stroke-width="2"><rect x="1" y="4" width="36" height="32" rx="1.500"></rect><path d="M10 20H28" stroke-width="2.400"></path></svg>
            删自选
          </button>
          <button class="action">
            <svg width="38" height="40" viewBox="0 0 38 40" fill="none" stroke="#8f8f8f" stroke-width="2"><circle cx="19" cy="20" r="17"></circle><path d="M13 14.500H25M13 20H25M13 25.500H25"></path></svg>
            功能
          </button>
        </div>
        <div class="home"></div>
        <div class="rest"></div>
      </footer>
    `;
  }
}
